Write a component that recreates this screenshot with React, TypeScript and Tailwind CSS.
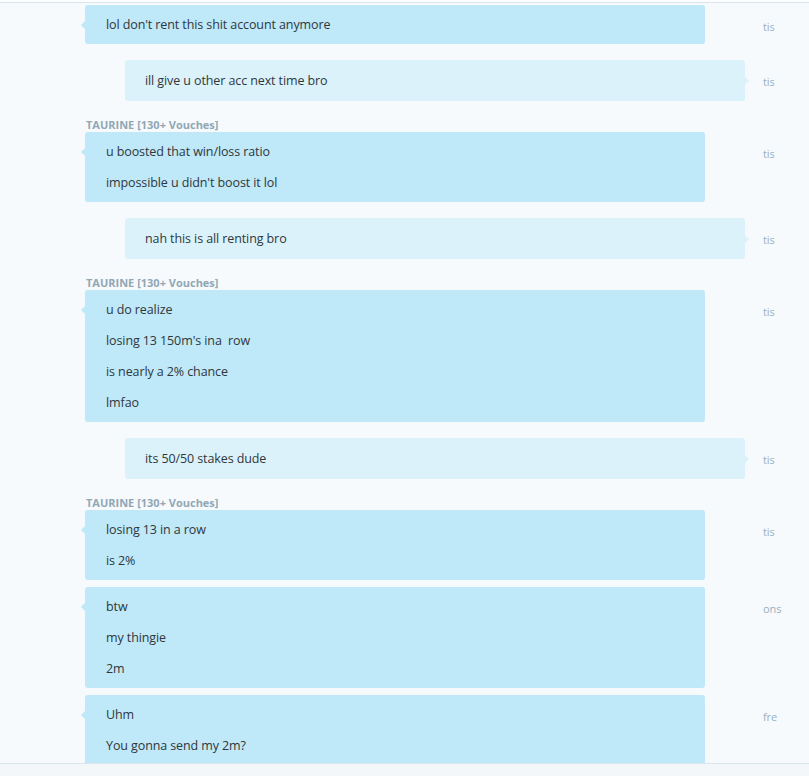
type Msg = {
  own?: boolean;
  name?: string;
  lines: string[];
  time: string;
  tight?: boolean;
};

const messages: Msg[] = [
  { lines: ["lol don't rent this shit account anymore"], time: "tis" },
  { own: true, lines: ["ill give u other acc next time bro"], time: "tis" },
  {
    name: "TAURINE [130+ Vouches]",
    lines: ["u boosted that win/loss ratio", "impossible u didn't boost it lol"],
    time: "tis",
  },
  { own: true, lines: ["nah this is all renting bro"], time: "tis" },
  {
    name: "TAURINE [130+ Vouches]",
    lines: [
      "u do realize",
      "losing 13 150m's ina\u00a0 row",
      "is nearly a 2% chance",
      "lmfao",
    ],
    time: "tis",
  },
  { own: true, lines: ["its 50/50 stakes dude"], time: "tis" },
  {
    name: "TAURINE [130+ Vouches]",
    lines: ["losing 13 in a row", "is 2%"],
    time: "tis",
  },
  { tight: true, lines: ["btw", "my thingie", "2m"], time: "ons" },
  { tight: true, lines: ["Uhm", "You gonna send my 2m?"], time: "fre" },
];

const Bubble = ({ msg }: { msg: Msg }) => {
  if (msg.own) {
    return (
      <div className="flex">
        <div className="relative ml-[125px] w-[620px] rounded-[3px] bg-[#dbf2fb] py-[5px] pl-[20px]">
          {msg.lines.map((line, i) => (
            <p key={i} className="leading-[31px]">
              {line}
            </p>
          ))}
          <span className="absolute right-[-4px] top-[17px] h-0 w-0 border-y-[4px] border-l-[4px] border-y-transparent border-l-[#dbf2fb]" />
        </div>
        <span className="ml-[18px] pt-[6px] text-[11px] leading-[31px] text-[#9ab0bd]">
          {msg.time}
        </span>
      </div>
    );
  }
  return (
    <div className="flex">
      <div className="relative ml-[85px] w-[620px] rounded-[3px] bg-[#bfe8f8] py-[4px] pl-[21px]">
        {msg.lines.map((line, i) => (
          <p key={i} className="leading-[31px]">
            {line}
          </p>
        ))}
        <span className="absolute left-[-4px] top-[16px] h-0 w-0 border-y-[4px] border-r-[4px] border-y-transparent border-r-[#bfe8f8]" />
      </div>
      <span className="ml-[58px] pt-[6px] text-[11px] leading-[31px] text-[#9ab0bd]">
        {msg.time}
      </span>
    </div>
  );
};

export default function App() {
  return (
    <div
      className="h-[776px] w-[809px] bg-[#f3f7fa] text-[12.5px] tracking-[-0.1px] text-[#2f373c]"
      style={{ fontFamily: "'Open Sans', 'Noto Sans', sans-serif" }}
    >
      <div className="h-[2px] bg-[#fbfdfe]" />
      <div className="h-[762px] overflow-hidden border-y border-[#d9e6ee] bg-[#f6fafd]">
        <div className="flex flex-col pt-[2px]">
          {messages.map((msg, i) => {
            const gap = i === 0 ? 0 : msg.tight ? 7 : 16;
            return (
              <div key={i} style={{ marginTop: gap }}>
                {msg.name && (
                  <div className="ml-[86px] h-[15px] text-[11px] font-bold leading-[15px] tracking-normal text-[#91a7b4]">
                    {msg.name}
                  </div>
                )}
                <Bubble msg={msg} />
              </div>
            );
          })}
        </div>
      </div>
    </div>
  );
}
